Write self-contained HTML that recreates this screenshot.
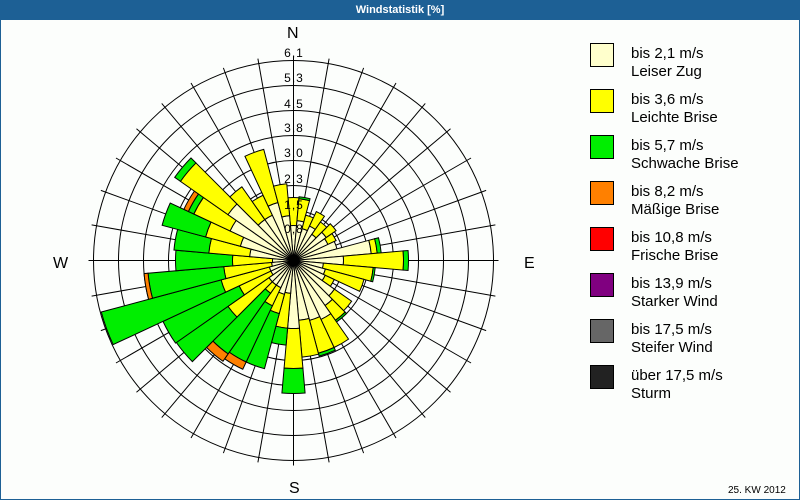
<!DOCTYPE html>
<html><head><meta charset="utf-8"><style>
body{margin:0;width:800px;height:500px;overflow:hidden;background:#fff;font-family:"Liberation Sans",sans-serif}
#t{position:absolute;left:0;top:0;width:800px;height:20px;background:#1d6095;color:#fff;font-size:11px;font-weight:bold;text-align:center;line-height:20px}
#m{position:absolute;left:0;top:20px;width:798px;height:479px;border:1px solid #1d6095;border-top:none;background:#fcfefc}
.lg{position:absolute;left:590px;width:22px;height:22px;border:1px solid #000}
.lt{position:absolute;left:631px;font-size:15px;line-height:18px;color:#000}
.c{position:absolute;font-size:16px;color:#000}
</style></head><body>
<div id="t">Windstatistik [%]</div>
<div id="m"></div>
<svg id="s" width="800" height="500" style="position:absolute;left:0;top:0">
<g id="grid" stroke="#000" stroke-width="1" fill="none"></g>
<g id="bars" stroke="#000" stroke-width="1"></g>
<g font-family="Liberation Sans, sans-serif" font-size="12" fill="#000" text-anchor="middle" letter-spacing="1">
<text x="294" y="57">6,1</text><text x="294" y="82">5,3</text><text x="294" y="108">4,5</text><text x="294" y="132">3,8</text><text x="294" y="157">3,0</text><text x="294" y="183">2,3</text><text x="294" y="209">1,5</text><text x="294" y="233">0,8</text>
</g>
</svg>
<div class="c" style="left:287px;top:25px">N</div>
<div class="c" style="left:524px;top:255px">E</div>
<div class="c" style="left:289px;top:480px">S</div>
<div class="c" style="left:53px;top:255px">W</div>
<div class="lg" style="top:43px;background:#ffffcc"></div><div class="lt" style="top:45px">bis 2,1 m/s<br>Leiser Zug</div>
<div class="lg" style="top:89px;background:#ffff00"></div><div class="lt" style="top:91px">bis 3,6 m/s<br>Leichte Brise</div>
<div class="lg" style="top:135px;background:#00ee00"></div><div class="lt" style="top:137px">bis 5,7 m/s<br>Schwache Brise</div>
<div class="lg" style="top:181px;background:#ff8000"></div><div class="lt" style="top:183px">bis 8,2 m/s<br>Mäßige Brise</div>
<div class="lg" style="top:227px;background:#ff0000"></div><div class="lt" style="top:229px">bis 10,8 m/s<br>Frische Brise</div>
<div class="lg" style="top:273px;background:#800080"></div><div class="lt" style="top:275px">bis 13,9 m/s<br>Starker Wind</div>
<div class="lg" style="top:319px;background:#666666"></div><div class="lt" style="top:321px">bis 17,5 m/s<br>Steifer Wind</div>
<div class="lg" style="top:365px;background:#222222"></div><div class="lt" style="top:367px">über 17,5 m/s<br>Sturm</div>
<div style="position:absolute;left:728px;top:485px;font-size:10px">25. KW 2012</div>
<script>
var cx=293.5,cy=260.5,NS="http://www.w3.org/2000/svg";
var g=document.getElementById('grid'),b=document.getElementById('bars');
function P(r,a){a=a*Math.PI/180;return [(cx+r*Math.sin(a)).toFixed(2),(cy-r*Math.cos(a)).toFixed(2)];}
for(var k=1;k<=8;k++){var c=document.createElementNS(NS,'circle');c.setAttribute('cx',cx);c.setAttribute('cy',cy);c.setAttribute('r',25*k);g.appendChild(c);}
for(var a=0;a<360;a+=10){var l=document.createElementNS(NS,'line'),p=P(205,a);l.setAttribute('x1',cx);l.setAttribute('y1',cy);l.setAttribute('x2',p[0]);l.setAttribute('y2',p[1]);g.appendChild(l);}
var col=['#ffffcc','#ffff00','#00ee00','#ff8000'];
var d={0:[35,63],10:[40,62,64],20:[33,47],30:[38,54],40:[32,47],50:[40,52],60:[38,47],70:[45],80:[78,84,88],90:[50,110,115],100:[30,80,82],110:[33,73],120:[35,45],130:[50,71],140:[55,73,75],150:[65,96],160:[62,96,99],170:[60,97],180:[68,108,133],190:[33,68,85],200:[35,55,112],210:[30,50,112,120],220:[30,40,114,123],230:[30,80,143],240:[25,60,144],250:[25,75,199],260:[22,70,146,150],270:[21,61,118],280:[44,85,120],290:[55,91,136],300:[70,110,116,121],310:[80,138,145],320:[50,90],330:[50,72],340:[60,115],350:[45,77]};
for(var k in d){var t=+k,v=d[k],r0=0;for(var i=0;i<v.length;i++){var r1=v[i],a1=t-5,a2=t+5,s;
var o1=P(r1,a1),o2=P(r1,a2);
if(r0==0)s='M'+cx+' '+cy+'L'+o1+'A'+r1+' '+r1+' 0 0 1 '+o2+'Z';
else{var i1=P(r0,a1),i2=P(r0,a2);s='M'+i1+'L'+o1+'A'+r1+' '+r1+' 0 0 1 '+o2+'L'+i2+'A'+r0+' '+r0+' 0 0 0 '+i1+'Z';}
var p=document.createElementNS(NS,'path');p.setAttribute('d',s);p.setAttribute('fill',col[i]);b.appendChild(p);r0=r1;}}
</script>
</body></html>
